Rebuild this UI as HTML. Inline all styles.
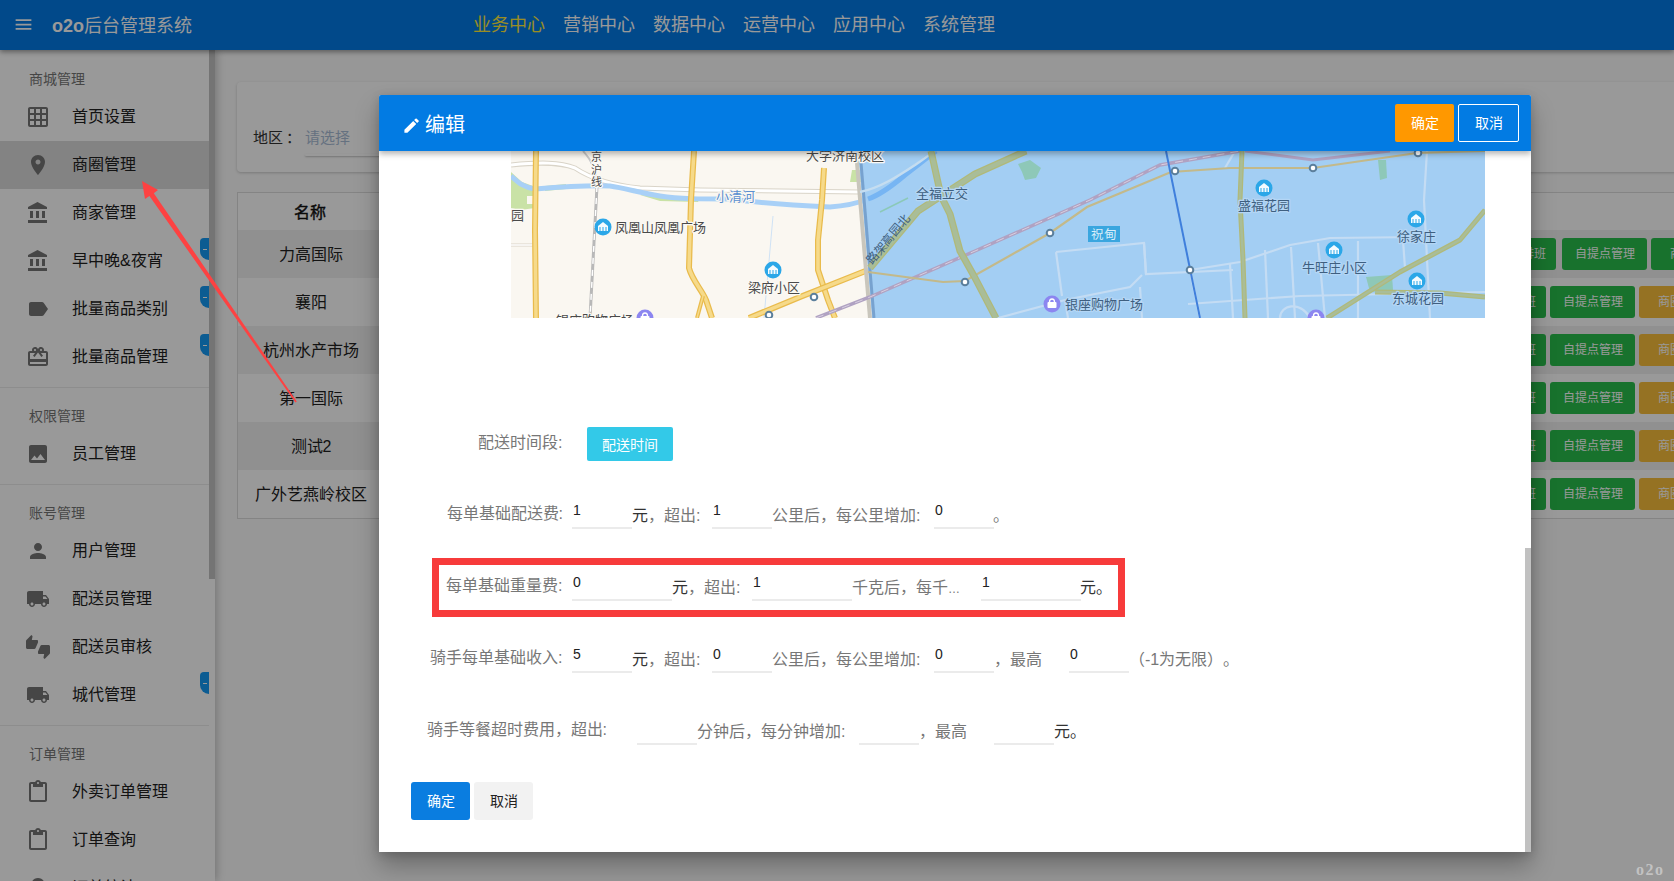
<!DOCTYPE html>
<html lang="zh-CN"><head><meta charset="utf-8">
<style>
*{box-sizing:border-box;margin:0;padding:0}
html,body{width:1674px;height:881px;overflow:hidden}
body{position:relative;text-spacing-trim:space-all;background:#fcfcfc;font-family:"Liberation Sans",sans-serif;color:#212121}
.abs{position:absolute}
.t{position:absolute;white-space:nowrap;line-height:1}
#hdr{left:0;top:0;width:1674px;height:50px;background:#037ae6;box-shadow:0 2px 5px rgba(0,0,0,.4);z-index:3}
#side{left:0;top:50px;width:215px;height:831px;background:#fff;z-index:2;box-shadow:2px 0 8px rgba(0,0,0,.22)}
.sec{position:absolute;left:29px;font-size:14px;line-height:14px;color:#757575;white-space:nowrap}
.item{position:absolute;left:0;width:209px;height:48px}
.item svg{position:absolute;left:26px;top:12px;width:24px;height:24px;fill:#757575}
.item span{position:absolute;left:72px;top:16px;font-size:16px;line-height:16px;color:#212121;white-space:nowrap}
.dv{position:absolute;left:0;width:209px;height:1px;background:#ececec}
.badge{position:absolute;left:200px;width:9px;height:22px;background:#1499f3;border-radius:4px 0 0 9px}
.badge:after{content:"";position:absolute;left:3px;top:11px;width:4px;height:1px;background:#fff}
#overlay{left:0;top:0;width:1674px;height:881px;background:rgba(0,0,0,.4);z-index:10}
#modal{left:379px;top:95px;width:1152px;height:757px;background:#fff;z-index:20;border-radius:2px 2px 0 0;box-shadow:0 14px 24px rgba(0,0,0,.28),0 2px 10px rgba(0,0,0,.16);overflow:hidden}
#mh{left:0;top:0;width:1152px;height:56px;background:#027be3;z-index:5;box-shadow:0 3px 6px rgba(0,0,0,.3)}
.lbl{position:absolute;white-space:nowrap;font-size:16px;line-height:16px;color:#777}
.dk{color:#333}
.inp{position:absolute;height:2px;background:#ebebeb}
.val{position:absolute;font-size:14px;line-height:14px;color:#212121;white-space:nowrap}
.tbtn{position:absolute;height:32px;border-radius:3px;color:#fff;font-size:12px;line-height:32px;text-align:center;white-space:nowrap;overflow:hidden}
</style></head><body>

<div id="hdr" class="abs">
<svg class="abs" style="left:13px;top:14px" width="21" height="21" viewBox="0 0 24 24"><path fill="#fff" d="M3 18h18v-2H3v2zm0-5h18v-2H3v2zm0-7v2h18V6H3z"/></svg>
<div class="t" style="left:52px;top:17px;font-size:18px;color:#fff"><b style="font-weight:bold">o2o</b>后台管理系统</div>
<div class="t" style="left:473px;top:16px;font-size:18px;color:#ffeb3b">业务中心</div>
<div class="t" style="left:563px;top:16px;font-size:18px;color:#fff">营销中心</div>
<div class="t" style="left:653px;top:16px;font-size:18px;color:#fff">数据中心</div>
<div class="t" style="left:743px;top:16px;font-size:18px;color:#fff">运营中心</div>
<div class="t" style="left:833px;top:16px;font-size:18px;color:#fff">应用中心</div>
<div class="t" style="left:923px;top:16px;font-size:18px;color:#fff">系统管理</div>
</div>
<div id="side" class="abs">
<div class="abs" style="left:209px;top:0;width:6px;height:529px;background:#c1c1c1"></div>
<div class="sec" style="top:22px">商城管理</div>
<div class="item" style="top:43px"><svg viewBox="0 0 24 24"><path d="M20 2H4c-1.1 0-2 .9-2 2v16c0 1.1.9 2 2 2h16c1.1 0 2-.9 2-2V4c0-1.1-.9-2-2-2zM8 20H4v-4h4v4zm0-6H4v-4h4v4zm0-6H4V4h4v4zm6 12h-4v-4h4v4zm0-6h-4v-4h4v4zm0-6h-4V4h4v4zm6 12h-4v-4h4v4zm0-6h-4v-4h4v4zm0-6h-4V4h4v4z"/></svg><span>首页设置</span></div>
<div class="item" style="top:91px;background:#dadada"><svg viewBox="0 0 24 24"><path d="M12 2C8.13 2 5 5.13 5 9c0 5.25 7 13 7 13s7-7.750 7-13c0-3.87-3.13-7-7-7zm0 9.5c-1.38 0-2.5-1.12-2.5-2.5s1.12-2.5 2.5-2.5 2.5 1.12 2.5 2.5-1.12 2.5-2.5 2.5z"/></svg><span>商圈管理</span></div>
<div class="item" style="top:139px"><svg viewBox="0 0 24 24"><path d="M4 10v7h3v-7H4zm6 0v7h3v-7h-3zM2 22h19v-3H2v3zm14-12v7h3v-7h-3zm-4.5-9L2 6v2h19V6l-9.5-5z"/></svg><span>商家管理</span></div>
<div class="item" style="top:187px"><svg viewBox="0 0 24 24"><path d="M4 10v7h3v-7H4zm6 0v7h3v-7h-3zM2 22h19v-3H2v3zm14-12v7h3v-7h-3zm-4.5-9L2 6v2h19V6l-9.5-5z"/></svg><span>早中晚&amp;夜宵</span></div>
<div class="badge" style="top:188px"></div>
<div class="item" style="top:235px"><svg viewBox="0 0 24 24"><path d="M17.63 5.84C17.27 5.33 16.67 5 16 5L5 5.01C3.9 5.01 3 5.9 3 7v10c0 1.1.9 1.99 2 1.99L16 19c.67 0 1.27-.33 1.63-.84L22 12l-4.37-6.16z"/></svg><span>批量商品类别</span></div>
<div class="badge" style="top:236px"></div>
<div class="item" style="top:283px"><svg viewBox="0 0 24 24"><path d="M20 6h-2.18c.11-.31.18-.65.18-1 0-1.66-1.34-3-3-3-1.05 0-1.96.54-2.5 1.35l-.5.67-.5-.68C10.96 2.54 10.05 2 9 2 7.34 2 6 3.34 6 5c0 .35.07.69.18 1H4c-1.11 0-1.99.89-1.99 2L2 19c0 1.11.89 2 2 2h16c1.11 0 2-.89 2-2V8c0-1.11-.89-2-2-2zm-5-2c.55 0 1 .45 1 1s-.45 1-1 1-1-.45-1-1 .45-1 1-1zM9 4c.55 0 1 .45 1 1s-.45 1-1 1-1-.45-1-1 .45-1 1-1zm11 15H4v-2h16v2zm0-5H4V8h5.08L7 10.83 8.62 12 11 8.76l1-1.36 1 1.36L15.38 12 17 10.83 14.92 8H20v6z"/></svg><span>批量商品管理</span></div>
<div class="badge" style="top:284px"></div>
<div class="dv" style="top:337px"></div>
<div class="sec" style="top:359px">权限管理</div>
<div class="item" style="top:380px"><svg viewBox="0 0 24 24"><path d="M21 19V5c0-1.1-.9-2-2-2H5c-1.1 0-2 .9-2 2v14c0 1.1.9 2 2 2h14c1.1 0 2-.9 2-2zM8.5 13.5l2.5 3.01L14.5 12l4.5 6H5l3.5-4.5z"/></svg><span>员工管理</span></div>
<div class="dv" style="top:434px"></div>
<div class="sec" style="top:456px">账号管理</div>
<div class="item" style="top:477px"><svg viewBox="0 0 24 24"><path d="M12 12c2.21 0 4-1.79 4-4s-1.79-4-4-4-4 1.79-4 4 1.79 4 4 4zm0 2c-2.670 0-8 1.34-8 4v2h16v-2c0-2.66-5.33-4-8-4z"/></svg><span>用户管理</span></div>
<div class="item" style="top:525px"><svg viewBox="0 0 24 24"><path d="M20 8h-3V4H3c-1.1 0-2 .9-2 2v11h2c0 1.66 1.34 3 3 3s3-1.34 3-3h6c0 1.66 1.34 3 3 3s3-1.34 3-3h2v-5l-3-4zM6 18.5c-.83 0-1.5-.67-1.5-1.5s.67-1.5 1.5-1.5 1.5.67 1.5 1.5-.67 1.5-1.5 1.5zm13.5-9l1.96 2.5H17V9.5h2.5zm-1.5 9c-.83 0-1.5-.67-1.5-1.5s.67-1.5 1.5-1.5 1.5.67 1.5 1.5-.67 1.5-1.5 1.5z"/></svg><span>配送员管理</span></div>
<div class="item" style="top:573px"><svg viewBox="0 0 24 24"><path d="M12 6c0-.55-.45-1-1-1H5.82l.66-3.18.02-.23c0-.31-.13-.59-.33-.8L5.38 0 .44 4.94C.17 5.21 0 5.59 0 6v6.5c0 .83.67 1.5 1.5 1.5h6.75c.62 0 1.15-.38 1.38-.91l2.26-5.29c.07-.17.11-.36.11-.55V6zm10.5 4h-6.75c-.62 0-1.15.38-1.38.91l-2.26 5.29c-.07.17-.11.36-.11.55V18c0 .55.45 1 1 1h5.18l-.66 3.18-.02.24c0 .31.13.59.33.8l.79.78 4.94-4.94c.27-.27.44-.65.44-1.06v-6.5c0-.83-.67-1.5-1.5-1.5z"/></svg><span>配送员审核</span></div>
<div class="item" style="top:621px"><svg viewBox="0 0 24 24"><path d="M20 8h-3V4H3c-1.1 0-2 .9-2 2v11h2c0 1.66 1.34 3 3 3s3-1.34 3-3h6c0 1.66 1.34 3 3 3s3-1.34 3-3h2v-5l-3-4zM6 18.5c-.83 0-1.5-.67-1.5-1.5s.67-1.5 1.5-1.5 1.5.67 1.5 1.5-.67 1.5-1.5 1.5zm13.5-9l1.96 2.5H17V9.5h2.5zm-1.5 9c-.83 0-1.5-.67-1.5-1.5s.67-1.5 1.5-1.5 1.5.67 1.5 1.5-.67 1.5-1.5 1.5z"/></svg><span>城代管理</span></div>
<div class="badge" style="top:622px"></div>
<div class="dv" style="top:675px"></div>
<div class="sec" style="top:697px">订单管理</div>
<div class="item" style="top:718px"><svg viewBox="0 0 24 24"><path d="M19 2h-4.18C14.4.84 13.3 0 12 0c-1.3 0-2.4.84-2.82 2H5c-1.1 0-2 .9-2 2v16c0 1.1.9 2 2 2h14c1.1 0 2-.9 2-2V4c0-1.1-.9-2-2-2zm-7 0c.55 0 1 .45 1 1s-.45 1-1 1-1-.45-1-1 .45-1 1-1zm7 18H5V4h2v3h10V4h2v16z"/></svg><span>外卖订单管理</span></div>
<div class="item" style="top:766px"><svg viewBox="0 0 24 24"><path d="M19 2h-4.18C14.4.84 13.3 0 12 0c-1.3 0-2.4.84-2.82 2H5c-1.1 0-2 .9-2 2v16c0 1.1.9 2 2 2h14c1.1 0 2-.9 2-2V4c0-1.1-.9-2-2-2zm-7 0c.55 0 1 .45 1 1s-.45 1-1 1-1-.45-1-1 .45-1 1-1zm7 18H5V4h2v3h10V4h2v16z"/></svg><span>订单查询</span></div>
<div class="item" style="top:814px"><svg viewBox="0 0 24 24"><path d="M12 2C8.13 2 5 5.13 5 9c0 5.25 7 13 7 13s7-7.75 7-13c0-3.87-3.13-7-7-7zm0 9.5c-1.38 0-2.5-1.12-2.5-2.5s1.12-2.5 2.5-2.5 2.5 1.12 2.5 2.5-1.12 2.5-2.5 2.5z"/></svg><span>订单统计</span></div>
</div>
<div class="abs" style="left:237px;top:82px;width:1460px;height:90px;background:#fff;border-radius:4px;box-shadow:0 1px 3px rgba(0,0,0,.2);z-index:1">
<div class="t" style="left:16px;top:48px;font-size:15px;color:#333">地区<span style="margin-left:3px">：</span></div>
<div class="t" style="left:68px;top:48px;font-size:15px;color:#a9bdd6">请选择</div>
<div class="abs" style="left:68px;top:72px;width:300px;height:2px;border-radius:2px;box-shadow:0 1px 2px rgba(0,0,0,.25)"></div>
</div>
<div class="abs" style="left:237px;top:192px;width:1460px;height:327px;background:#fff;border:1px solid #dcdcdc;z-index:1">
<div class="t" style="left:56px;top:12px;font-size:16px;-webkit-text-stroke:0.4px #111;color:#111">名称</div>
<div class="abs" style="left:0;top:37px;width:1460px;height:48px;background:#f0f0f0"></div>
<div class="t" style="left:0;width:146px;text-align:center;top:54px;font-size:16px;color:#212121">力高国际</div>
<div class="tbtn" style="left:1233px;top:45px;width:85px;background:#29bf4c;text-align:right;padding-right:10px">早中晚排班</div>
<div class="tbtn" style="left:1324px;top:45px;width:85px;background:#29bf4c">自提点管理</div>
<div class="tbtn" style="left:1413px;top:45px;width:85px;background:#29bf4c">商圈管理</div>
<div class="abs" style="left:0;top:85px;width:1460px;height:48px;background:#fff"></div>
<div class="t" style="left:0;width:146px;text-align:center;top:102px;font-size:16px;color:#212121">襄阳</div>
<div class="tbtn" style="left:1223px;top:93px;width:85px;background:#29bf4c;text-align:right;padding-right:10px">早中晚排班</div>
<div class="tbtn" style="left:1312px;top:93px;width:85px;background:#29bf4c">自提点管理</div>
<div class="tbtn" style="left:1401px;top:93px;width:85px;background:#f9bf3b">商圈管理</div>
<div class="abs" style="left:0;top:133px;width:1460px;height:48px;background:#f0f0f0"></div>
<div class="t" style="left:0;width:146px;text-align:center;top:150px;font-size:16px;color:#212121">杭州水产市场</div>
<div class="tbtn" style="left:1223px;top:141px;width:85px;background:#29bf4c;text-align:right;padding-right:10px">早中晚排班</div>
<div class="tbtn" style="left:1312px;top:141px;width:85px;background:#29bf4c">自提点管理</div>
<div class="tbtn" style="left:1401px;top:141px;width:85px;background:#f9bf3b">商圈管理</div>
<div class="abs" style="left:0;top:181px;width:1460px;height:48px;background:#fff"></div>
<div class="t" style="left:0;width:146px;text-align:center;top:198px;font-size:16px;color:#212121">第一国际</div>
<div class="tbtn" style="left:1223px;top:189px;width:85px;background:#29bf4c;text-align:right;padding-right:10px">早中晚排班</div>
<div class="tbtn" style="left:1312px;top:189px;width:85px;background:#29bf4c">自提点管理</div>
<div class="tbtn" style="left:1401px;top:189px;width:85px;background:#f9bf3b">商圈管理</div>
<div class="abs" style="left:0;top:229px;width:1460px;height:48px;background:#f0f0f0"></div>
<div class="t" style="left:0;width:146px;text-align:center;top:246px;font-size:16px;color:#212121">测试2</div>
<div class="tbtn" style="left:1223px;top:237px;width:85px;background:#29bf4c;text-align:right;padding-right:10px">早中晚排班</div>
<div class="tbtn" style="left:1312px;top:237px;width:85px;background:#29bf4c">自提点管理</div>
<div class="tbtn" style="left:1401px;top:237px;width:85px;background:#f9bf3b">商圈管理</div>
<div class="abs" style="left:0;top:277px;width:1460px;height:48px;background:#fff"></div>
<div class="t" style="left:0;width:146px;text-align:center;top:294px;font-size:16px;color:#212121">广外艺燕岭校区</div>
<div class="tbtn" style="left:1223px;top:285px;width:85px;background:#29bf4c;text-align:right;padding-right:10px">早中晚排班</div>
<div class="tbtn" style="left:1312px;top:285px;width:85px;background:#29bf4c">自提点管理</div>
<div class="tbtn" style="left:1401px;top:285px;width:85px;background:#f9bf3b">商圈管理</div>
</div>
<div id="overlay" class="abs"></div>
<div id="modal" class="abs">
<div id="mh" class="abs">
<svg class="abs" style="left:23.4px;top:20.6px" width="19.2" height="19.2" viewBox="0 0 24 24"><path fill="#fff" d="M3 17.25V21h3.75L17.81 9.94l-3.75-3.75L3 17.25zM20.71 7.04c.39-.39.39-1.02 0-1.41l-2.34-2.34c-.39-.39-1.02-.39-1.41 0l-1.83 1.83 3.75 3.75 1.83-1.83z"/></svg>
<div class="t" style="left:46px;top:20px;font-size:20px;color:#fff">编辑</div>
<div class="abs" style="left:1016px;top:9px;width:59px;height:38px;background:#ff9800;border-radius:2px;color:#fff;font-size:14px;line-height:38px;text-align:center">确定</div>
<div class="abs" style="left:1079px;top:9px;width:61px;height:38px;border:1px solid #fff;border-radius:2px;color:#fff;font-size:14px;line-height:36px;text-align:center">取消</div>
</div>
<div class="abs" style="left:132px;top:56px;width:974px;height:167px;overflow:hidden"><svg width="974" height="167" viewBox="511 151 974 167" style="display:block"><rect x="511" y="151" width="974" height="167" fill="#faf7f1"/><path d="M511 172 L522 182 L533 186 L535 208 L520 210 L511 208z" fill="#c9e2a6"/><path d="M527 196 L535 196 L535 204 L527 204z" fill="#faf7f1"/><path d="M545 186 L566 184 L566 189 L545 191z" fill="#c9e2a6"/><path d="M640 195 L700 198 L698 202 L660 201z" fill="#c9e2a6"/><path d="M852 170 L862 170 L862 182 L850 182z" fill="#c9e2a6"/><path d="M511 165 C540 162 560 162 575 168 C590 178 610 185 640 188 L700 190 L860 192" fill="none" stroke="#d9d4c8" stroke-width="5"/><path d="M511 165 C540 162 560 162 575 168 C590 178 610 185 640 188 L700 190 L860 192" fill="none" stroke="#fff" stroke-width="3"/><path d="M511 245 L535 245" stroke="#d9d4c8" stroke-width="3"/><path d="M511 245 L535 245" stroke="#fff" stroke-width="1.5"/><path d="M511 176 C518 182 524 188 535 189 C560 187 585 185 610 186 C625 188 640 193 660 196 C680 199 700 199 730 199 C760 203 790 205 830 207 C845 206 858 203 868 199" fill="none" stroke="#a8d0f7" stroke-width="5"/><path d="M597 186 L590 318" stroke="#b8b8b8" stroke-width="3"/><path d="M597 186 L590 318" stroke="#fff" stroke-width="1.4" stroke-dasharray="6 6"/><path d="M583 151 C590 158 596 168 597 186" fill="none" stroke="#c8c8c8" stroke-width="2"/><path d="M773 216 L764 318" stroke="#cfe2f5" stroke-width="1"/><path d="M536 151 L535 230 L536 318" fill="none" stroke="#e9bb4c" stroke-width="6" stroke-linejoin="round"/><path d="M536 151 L535 230 L536 318" fill="none" stroke="#f6da8a" stroke-width="3.5" stroke-linejoin="round"/><path d="M694 151 L691 200 L689 268 C692 280 702 290 706 300 L712 318" fill="none" stroke="#e9bb4c" stroke-width="6" stroke-linejoin="round"/><path d="M694 151 L691 200 L689 268 C692 280 702 290 706 300 L712 318" fill="none" stroke="#f6da8a" stroke-width="3.5" stroke-linejoin="round"/><path d="M703 296 L697 318" fill="none" stroke="#e9bb4c" stroke-width="4" stroke-linejoin="round"/><path d="M703 296 L697 318" fill="none" stroke="#f6da8a" stroke-width="1.5" stroke-linejoin="round"/><path d="M824 168 L822 200 L818 240 L818 270 L828 300 L835 318" fill="none" stroke="#e9bb4c" stroke-width="6" stroke-linejoin="round"/><path d="M824 168 L822 200 L818 240 L818 270 L828 300 L835 318" fill="none" stroke="#f6da8a" stroke-width="3.5" stroke-linejoin="round"/><path d="M749 318 L800 297 L868 270" fill="none" stroke="#e9bb4c" stroke-width="6" stroke-linejoin="round"/><path d="M749 318 L800 297 L868 270" fill="none" stroke="#f6da8a" stroke-width="3.5" stroke-linejoin="round"/><path d="M858 151 L1485 151 L1485 318 L872 318 Z" fill="#a3cef3"/><path d="M856 151 L870 318" stroke="#c9c6bc" stroke-width="4"/><path d="M860 151 L874 318" stroke="#77a2cf" stroke-width="3"/><path d="M1056 252 L1144 243 L1146 274 L1233 270" fill="none" stroke="#c4dcf3" stroke-width="2.2"/><path d="M1056 252 L1062 296" fill="none" stroke="#c4dcf3" stroke-width="2.2"/><path d="M1144 243 L1146 274" fill="none" stroke="#c4dcf3" stroke-width="2.2"/><path d="M998 318 L1065 300 L1130 287 L1142 275" fill="none" stroke="#c4dcf3" stroke-width="2.2"/><path d="M1140 287 L1142 318" fill="none" stroke="#c4dcf3" stroke-width="2.2"/><path d="M1065 300 L1068 318" fill="none" stroke="#c4dcf3" stroke-width="2.2"/><path d="M1190 270 L1240 262 L1290 245 L1330 238 L1420 237" fill="none" stroke="#c4dcf3" stroke-width="2.2"/><path d="M1190 270 L1200 318" fill="none" stroke="#c4dcf3" stroke-width="2.2"/><path d="M1230 264 L1233 318" fill="none" stroke="#c4dcf3" stroke-width="2.2"/><path d="M1188 304 L1300 296 L1485 292" fill="none" stroke="#c4dcf3" stroke-width="2.2"/><path d="M1265 250 L1268 318" fill="none" stroke="#c4dcf3" stroke-width="2.2"/><path d="M1291 247 L1295 318" fill="none" stroke="#c4dcf3" stroke-width="2.2"/><path d="M1318 243 L1325 318" fill="none" stroke="#c4dcf3" stroke-width="2.2"/><path d="M1358 241 L1358 318" fill="none" stroke="#c4dcf3" stroke-width="2.2"/><path d="M1403 240 L1405 268" fill="none" stroke="#c4dcf3" stroke-width="2.2"/><path d="M1427 151 L1424 200 L1430 318" fill="none" stroke="#c4dcf3" stroke-width="2.2"/><path d="M1280 318 C1280 305 1300 300 1310 318" fill="none" stroke="#c4dcf3" stroke-width="2.2"/><path d="M1225 168 L1235 151" fill="none" stroke="#c4dcf3" stroke-width="2.2"/><path d="M1018 164 L1030 160 L1041 168 L1036 178 L1025 180 L1022 172z" fill="#8ec8b8"/><path d="M1378 160 L1386 160 L1387 178 L1380 180z" fill="#8ec8b8"/><path d="M1366 277 L1392 275 L1393 290 L1370 292z" fill="#8ec8b8"/><path d="M868 199 C880 195 892 186 905 175 C918 165 928 157 936 151" fill="none" stroke="#77b5f3" stroke-width="5"/><path d="M860 192 C880 188 900 175 915 165 C925 158 930 154 935 151" fill="none" stroke="#c5ddf0" stroke-width="2.5"/><path d="M880 212 L908 198" stroke="#8cc9b8" stroke-width="1.5"/><path d="M816 318 L870 297 L975 251 L1090 200 L1160 165 L1240 151" fill="none" stroke="#b0a2c2" stroke-width="3.5"/><path d="M816 318 L870 297 L975 251 L1090 200 L1160 165 L1240 151" fill="none" stroke="#d8d0e0" stroke-width="1" stroke-dasharray="8 6"/><path d="M1245 151 L1313 160 L1390 151" fill="none" stroke="#b0a2c2" stroke-width="3"/><path d="M868 272 L943 282 L965 281 L1050 233 L1087 207 L1171 172 L1230 168 L1313 168 L1417 153 L1485 151" fill="none" stroke="#c3b98a" stroke-width="2.2"/><path d="M931 151 L941 196 L950 214 L960 251 L974 276 L996 318" fill="none" stroke="#b0b97a" stroke-width="7" stroke-linejoin="round"/><path d="M931 151 L941 196 L950 214 L960 251 L974 276 L996 318" fill="none" stroke="#a9bd98" stroke-width="4.5" stroke-linejoin="round"/><path d="M870 268 L918 211 L975 174 L1026 151" fill="none" stroke="#b0b97a" stroke-width="7" stroke-linejoin="round"/><path d="M870 268 L918 211 L975 174 L1026 151" fill="none" stroke="#a9bd98" stroke-width="4.5" stroke-linejoin="round"/><path d="M1242 151 L1240 200 L1243 260 L1245 318" fill="none" stroke="#b0b97a" stroke-width="5" stroke-linejoin="round"/><path d="M1242 151 L1240 200 L1243 260 L1245 318" fill="none" stroke="#a9bd98" stroke-width="2.5" stroke-linejoin="round"/><path d="M1327 318 L1400 272 L1460 240 L1485 210" fill="none" stroke="#b0b97a" stroke-width="5" stroke-linejoin="round"/><path d="M1327 318 L1400 272 L1460 240 L1485 210" fill="none" stroke="#a9bd98" stroke-width="2.5" stroke-linejoin="round"/><path d="M1375 292 L1440 293 L1485 297" fill="none" stroke="#b0b97a" stroke-width="5" stroke-linejoin="round"/><path d="M1375 292 L1440 293 L1485 297" fill="none" stroke="#a9bd98" stroke-width="2.5" stroke-linejoin="round"/><path d="M1166 151 L1200 318" stroke="#3f7fdc" stroke-width="2"/><circle cx="814" cy="297" r="3.3" fill="#fff" stroke="#5b7f9c" stroke-width="2"/><circle cx="769" cy="315" r="3.3" fill="#fff" stroke="#5b7f9c" stroke-width="2"/><circle cx="965" cy="282" r="3.3" fill="#fff" stroke="#5b7f9c" stroke-width="2"/><circle cx="1050" cy="233" r="3.3" fill="#fff" stroke="#5b7f9c" stroke-width="2"/><circle cx="1175" cy="171" r="3.3" fill="#fff" stroke="#5b7f9c" stroke-width="2"/><circle cx="1190" cy="270" r="3.3" fill="#fff" stroke="#5b7f9c" stroke-width="2"/><circle cx="1313" cy="168" r="3.3" fill="#fff" stroke="#5b7f9c" stroke-width="2"/><circle cx="1418" cy="153" r="3.3" fill="#fff" stroke="#5b7f9c" stroke-width="2"/><circle cx="603" cy="227" r="8.5" fill="#2ba7e8"/><path d="M598 231h10v-5l-5-4-5 4z" fill="#fff" opacity=".95"/><path d="M600 231v-4M603 231v-4M606 231v-4" stroke="#2ba7e8" stroke-width="1"/><circle cx="773" cy="270" r="8.5" fill="#2ba7e8"/><path d="M768 274h10v-5l-5-4-5 4z" fill="#fff" opacity=".95"/><path d="M770 274v-4M773 274v-4M776 274v-4" stroke="#2ba7e8" stroke-width="1"/><circle cx="1264" cy="188" r="8.5" fill="#2ba7e8"/><path d="M1259 192h10v-5l-5-4-5 4z" fill="#fff" opacity=".95"/><path d="M1261 192v-4M1264 192v-4M1267 192v-4" stroke="#2ba7e8" stroke-width="1"/><circle cx="1416" cy="219" r="8.5" fill="#2ba7e8"/><path d="M1411 223h10v-5l-5-4-5 4z" fill="#fff" opacity=".95"/><path d="M1413 223v-4M1416 223v-4M1419 223v-4" stroke="#2ba7e8" stroke-width="1"/><circle cx="1334" cy="250" r="8.5" fill="#2ba7e8"/><path d="M1329 254h10v-5l-5-4-5 4z" fill="#fff" opacity=".95"/><path d="M1331 254v-4M1334 254v-4M1337 254v-4" stroke="#2ba7e8" stroke-width="1"/><circle cx="1417" cy="281" r="8.5" fill="#2ba7e8"/><path d="M1412 285h10v-5l-5-4-5 4z" fill="#fff" opacity=".95"/><path d="M1414 285v-4M1417 285v-4M1420 285v-4" stroke="#2ba7e8" stroke-width="1"/><circle cx="1052" cy="304" r="8.5" fill="#8c86f0"/><rect x="1047.5" y="302" width="9" height="6" rx="1" fill="#fff"/><path d="M1049.5 302a2.5 3 0 0 1 5 0" fill="none" stroke="#fff" stroke-width="1.3"/><circle cx="645" cy="318" r="8.5" fill="#8c86f0"/><rect x="640.5" y="316" width="9" height="6" rx="1" fill="#fff"/><path d="M642.5 316a2.5 3 0 0 1 5 0" fill="none" stroke="#fff" stroke-width="1.3"/><circle cx="1316" cy="318" r="8.5" fill="#8c86f0"/><rect x="1311.5" y="316" width="9" height="6" rx="1" fill="#fff"/><path d="M1313.5 316a2.5 3 0 0 1 5 0" fill="none" stroke="#fff" stroke-width="1.3"/><text x="511" y="220" font-size="13" fill="#4a4a4a" stroke="#fbf9f4" stroke-width="2.5" paint-order="stroke" stroke-linejoin="round">园</text><text x="615" y="232" font-size="13" fill="#4a4a4a" stroke="#fbf9f4" stroke-width="2.5" paint-order="stroke" stroke-linejoin="round">凤凰山凤凰广场</text><text x="806" y="160" font-size="13" fill="#4a4a4a" stroke="#fbf9f4" stroke-width="2.5" paint-order="stroke" stroke-linejoin="round">大学济南校区</text><text x="748" y="292" font-size="13" fill="#4a4a4a" stroke="#fbf9f4" stroke-width="2.5" paint-order="stroke" stroke-linejoin="round">梁府小区</text><text x="556" y="325" font-size="13" fill="#4a4a4a" stroke="#fbf9f4" stroke-width="2.5" paint-order="stroke" stroke-linejoin="round">银座购物广场</text><text x="591" y="161" font-size="11" fill="#4a4a4a" stroke="#fbf9f4" stroke-width="2.5" paint-order="stroke" stroke-linejoin="round">京</text><text x="591" y="174" font-size="11" fill="#4a4a4a" stroke="#fbf9f4" stroke-width="2.5" paint-order="stroke" stroke-linejoin="round">沪</text><text x="591" y="186" font-size="11" fill="#4a4a4a" stroke="#fbf9f4" stroke-width="2.5" paint-order="stroke" stroke-linejoin="round">线</text><text x="716" y="201" font-size="13" fill="#5b8fd0" stroke="#faf7f1" stroke-width="2.5" paint-order="stroke" stroke-linejoin="round">小清河</text><text x="916" y="198" font-size="13" fill="#3e5f80" stroke="#b4d6f5" stroke-width="2.5" paint-order="stroke" stroke-linejoin="round">全福立交</text><text x="1238" y="210" font-size="13" fill="#3e5f80" stroke="#b4d6f5" stroke-width="2.5" paint-order="stroke" stroke-linejoin="round">盛福花园</text><text x="1397" y="241" font-size="13" fill="#3e5f80" stroke="#b4d6f5" stroke-width="2.5" paint-order="stroke" stroke-linejoin="round">徐家庄</text><text x="1302" y="272" font-size="13" fill="#3e5f80" stroke="#b4d6f5" stroke-width="2.5" paint-order="stroke" stroke-linejoin="round">牛旺庄小区</text><text x="1392" y="303" font-size="13" fill="#3e5f80" stroke="#b4d6f5" stroke-width="2.5" paint-order="stroke" stroke-linejoin="round">东城花园</text><text x="1065" y="309" font-size="13" fill="#3e5f80" stroke="#b4d6f5" stroke-width="2.5" paint-order="stroke" stroke-linejoin="round">银座购物广场</text><rect x="1088" y="226" width="32" height="16" fill="#3aa6df"/><text x="1091" y="239" font-size="12.5" fill="#d8eefa">祝甸</text><text transform="translate(872,265) rotate(-50)" font-size="12" fill="#3e5f80">路架高园北</text></svg></div>
<div class="lbl" style="left:99px;top:340px">配送时间段:</div>
<div class="abs" style="left:208px;top:332px;width:86px;height:34px;background:#33c9e8;border-radius:2px;color:#fff;font-size:14px;line-height:36px;text-align:center">配送时间</div>
<div class="lbl" style="left:67.5px;top:411px">每单基础配送费:</div>
<div class="inp" style="left:193px;top:432px;width:60px"></div>
<div class="val" style="left:194px;top:408px">1</div>
<div class="lbl" style="left:253px;top:412.5px"><span class="dk">元</span>，超出:</div>
<div class="inp" style="left:333px;top:432px;width:60px"></div>
<div class="val" style="left:334px;top:408px">1</div>
<div class="lbl" style="left:393px;top:412.5px">公里后，每公里增加:</div>
<div class="inp" style="left:555px;top:432px;width:60px"></div>
<div class="val" style="left:556px;top:408px">0</div>
<div class="lbl" style="left:614px;top:412.5px">。</div>
<div class="lbl" style="left:67px;top:483px">每单基础重量费:</div>
<div class="inp" style="left:193px;top:504px;width:100px"></div>
<div class="val" style="left:194px;top:480px">0</div>
<div class="lbl" style="left:293px;top:484.5px"><span class="dk">元</span>，超出:</div>
<div class="inp" style="left:373px;top:504px;width:100px"></div>
<div class="val" style="left:374px;top:480px">1</div>
<div class="lbl" style="left:473px;top:484.5px">千克后，每千<span style="font-family:Liberation Sans;font-size:12px">…</span></div>
<div class="inp" style="left:602px;top:504px;width:100px"></div>
<div class="val" style="left:603px;top:480px">1</div>
<div class="lbl" style="left:701px;top:484.5px"><span class="dk">元。</span></div>
<div class="lbl" style="left:51px;top:555px">骑手每单基础收入:</div>
<div class="inp" style="left:193px;top:576px;width:60px"></div>
<div class="val" style="left:194px;top:552px">5</div>
<div class="lbl" style="left:253px;top:556.5px"><span class="dk">元</span>，超出:</div>
<div class="inp" style="left:333px;top:576px;width:60px"></div>
<div class="val" style="left:334px;top:552px">0</div>
<div class="lbl" style="left:393px;top:556.5px">公里后，每公里增加:</div>
<div class="inp" style="left:555px;top:576px;width:60px"></div>
<div class="val" style="left:556px;top:552px">0</div>
<div class="lbl" style="left:615px;top:556.5px">，最高</div>
<div class="inp" style="left:690px;top:576px;width:60px"></div>
<div class="val" style="left:691px;top:552px">0</div>
<div class="lbl" style="left:750px;top:556.5px">（-1为无限）。</div>
<div class="lbl" style="left:47.5px;top:627px">骑手等餐超时费用，超出:</div>
<div class="inp" style="left:258px;top:648px;width:60px"></div>
<div class="lbl" style="left:318px;top:628.5px">分钟后，每分钟增加:</div>
<div class="inp" style="left:480px;top:648px;width:60px"></div>
<div class="lbl" style="left:540px;top:628.5px">，最高</div>
<div class="inp" style="left:615px;top:648px;width:60px"></div>
<div class="lbl" style="left:675px;top:628.5px"><span class="dk">元。</span></div>
<div class="abs" style="left:32px;top:687px;width:59px;height:38px;background:#0a7de0;border-radius:3px;color:#fff;font-size:14px;line-height:38px;text-align:center">确定</div>
<div class="abs" style="left:95px;top:687px;width:59px;height:38px;background:#f2f2f2;border-radius:3px;color:#212121;font-size:14px;line-height:38px;text-align:center">取消</div>
<div class="abs" style="left:1146px;top:453px;width:6px;height:304px;background:#c1c1c1"></div>
</div>
<svg class="abs" style="left:0;top:0;z-index:40" width="1674" height="881">
<polygon fill="#fd4242" points="142,181 158,190 153.8,193.2 296.8,401.6 295.4,402.4 149.4,196.1 145,199"/>
<rect x="435.5" y="561.5" width="686" height="52" fill="none" stroke="#f73b3b" stroke-width="7"/>
</svg>
<div class="t" style="left:1636px;top:862px;font-family:'Liberation Serif',serif;font-size:16px;font-weight:bold;letter-spacing:1.5px;color:#c2c2c2;z-index:15">o2o</div>
</body></html>
